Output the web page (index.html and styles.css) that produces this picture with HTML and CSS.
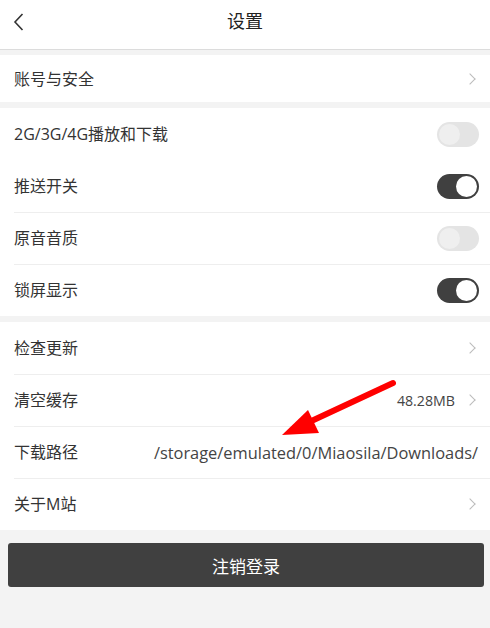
FILE: index.html
```html
<!DOCTYPE html>
<html lang="zh">
<head>
<meta charset="utf-8">
<title>设置</title>
<link rel="stylesheet" href="styles.css">
</head>
<body>
<div class="page">
  <header class="topbar">
    <svg class="back" width="12" height="18" viewBox="0 0 12 18"><path d="M9.5 1 L2 9 L9.5 17" fill="none" stroke="#333" stroke-width="1.6"/></svg>
    <h1 class="title">设置</h1>
  </header>

  <section class="group g1">
    <div class="row">
      <span class="label">账号与安全</span>
      <span class="chev"></span>
    </div>
  </section>

  <section class="group">
    <div class="row nosep">
      <span class="label">2G/3G/4G播放和下载</span>
      <span class="toggle"></span>
    </div>
    <div class="row">
      <span class="label">推送开关</span>
      <span class="toggle on"></span>
    </div>
    <div class="row">
      <span class="label">原音音质</span>
      <span class="toggle"></span>
    </div>
    <div class="row">
      <span class="label">锁屏显示</span>
      <span class="toggle on"></span>
    </div>
  </section>

  <section class="group">
    <div class="row">
      <span class="label">检查更新</span>
      <span class="chev"></span>
    </div>
    <div class="row">
      <span class="label">清空缓存</span>
      <span class="value">48.28MB</span>
      <span class="chev"></span>
    </div>
    <div class="row">
      <span class="label">下载路径</span>
      <span class="path">/storage/emulated/0/Miaosila/Downloads/</span>
    </div>
    <div class="row">
      <span class="label">关于M站</span>
      <span class="chev"></span>
    </div>
  </section>

  <div class="btnwrap">
    <button class="logout">注销登录</button>
  </div>

  <svg class="arrow" width="490" height="628" viewBox="0 0 490 628">
    <line x1="393" y1="383" x2="305" y2="424" stroke="#f00" stroke-width="6" stroke-linecap="round"/>
    <polygon points="282,435 308,410 319,433" fill="#f00"/>
  </svg>
</div>
</body>
</html>
```

FILE: styles.css
```css
* { box-sizing: border-box; }
html, body { margin: 0; padding: 0; }
body {
  background: #f3f3f3;
  font-family: "Open Sans", "Noto Sans CJK SC", sans-serif;
  color: #333;
}
.page {
  position: relative;
  width: 490px;
  height: 628px;
  overflow: hidden;
}
.topbar {
  height: 50px;
  background: #fff;
  border-bottom: 1px solid #dcdcdc;
  display: flex;
  align-items: center;
  justify-content: center;
  position: relative;
}
.back {
  position: absolute;
  left: 13px;
  top: 13px;
}
.title {
  margin: 0;
  font-size: 18px;
  font-weight: normal;
  color: #222;
  padding-bottom: 9px;
}
.group {
  background: #fff;
  margin-top: 6px;
}
.g1 { margin-top: 5px; }
.g1 .row { height: 47px; }
.row {
  height: 52px;
  display: flex;
  align-items: center;
  padding: 0 12px 0 14px;
  position: relative;
}
.row + .row::before {
  content: "";
  position: absolute;
  left: 14px;
  right: 0;
  top: 0;
  border-top: 1px solid #eeeeee;
}
.row.nosep + .row::before { display: none; }
.label {
  flex: 1;
  font-size: 16px;
  color: #333;
  padding-bottom: 2px;
}
.value {
  font-size: 14.2px;
  color: #444;
  margin-right: 11px;
}
.path {
  font-size: 16.4px;
  color: #444;
  white-space: nowrap;
}
.chev {
  width: 8px;
  height: 8px;
  border-top: 1.3px solid #bbb;
  border-right: 1.3px solid #bbb;
  transform: rotate(45deg);
  margin-right: 4px;
}
.toggle {
  width: 42px;
  height: 25px;
  border-radius: 13px;
  background: #e4e4e4;
  position: relative;
  margin-right: -1px;
}
.toggle::after {
  content: "";
  position: absolute;
  left: 2px;
  top: 2px;
  width: 21px;
  height: 21px;
  border-radius: 50%;
  background: #efefef;
}
.toggle.on { background: #404040; }
.toggle.on::after {
  left: auto;
  right: 2px;
  background: #fff;
}
.btnwrap {
  padding: 13px 6px 0 8px;
}
.logout {
  display: block;
  width: 100%;
  height: 44px;
  border: none;
  border-radius: 3px;
  background: #404040;
  color: #fff;
  font-family: "Open Sans", "Noto Sans CJK SC", sans-serif;
  font-size: 17px;
}
.arrow {
  position: absolute;
  left: 0;
  top: 0;
  pointer-events: none;
}
```
